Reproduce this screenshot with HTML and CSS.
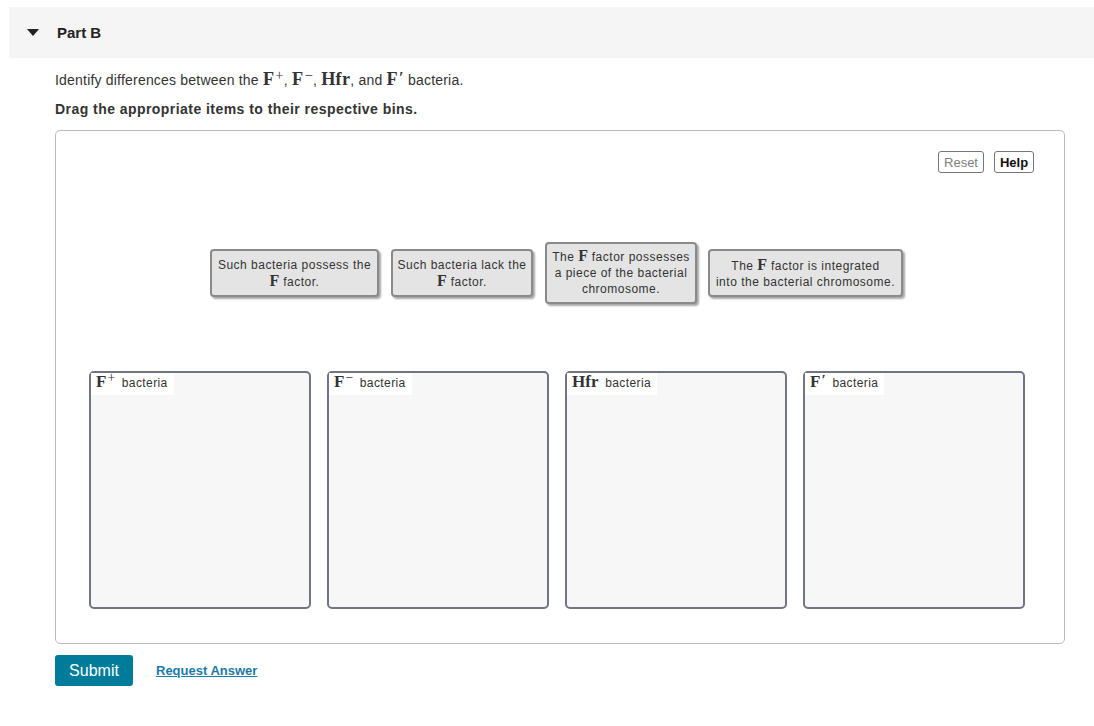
FILE: index.html
```html
<!DOCTYPE html>
<html lang="en">
<head>
    <meta charset="UTF-8">
    <title>Part B</title>
    <link rel="stylesheet" href="styles.css">
</head>
<body>
    <div class="part">
        <div class="part-header">
            <svg class="caret" width="12" height="7" viewBox="0 0 12 7"><polygon points="0,0 12,0 6,7" fill="#222"/></svg>
            <h2 class="part-title">Part B</h2>
        </div>

        <div class="part-body">
            <p class="question">Identify differences between the <span class="m">F<sup>+</sup></span>, <span class="m">F<sup>&minus;</sup></span>, <span class="m">Hfr</span>, and <span class="m">F<sup class="pr">&prime;</sup></span> bacteria.</p>
            <p class="instructions">Drag the appropriate items to their respective bins.</p>

            <div class="dnd-box">
                <div class="toolbar">
                    <button class="tool-btn reset">Reset</button>
                    <button class="tool-btn help">Help</button>
                </div>

                <div class="items">
                    <div class="item w1">Such bacteria possess the<br><span class="m">F</span> factor.</div>
                    <div class="item w2">Such bacteria lack the<br><span class="m">F</span> factor.</div>
                    <div class="item w3">The <span class="m">F</span> factor possesses<br>a piece of the bacterial<br>chromosome.</div>
                    <div class="item w4">The <span class="m">F</span> factor is integrated<br>into the bacterial chromosome.</div>
                </div>

                <div class="bins">
                    <div class="bin"><div class="bin-label"><span class="m">F<sup>+</sup></span> bacteria</div></div>
                    <div class="bin"><div class="bin-label"><span class="m">F<sup>&minus;</sup></span> bacteria</div></div>
                    <div class="bin"><div class="bin-label"><span class="m">Hfr</span> bacteria</div></div>
                    <div class="bin"><div class="bin-label"><span class="m">F<sup class="pr">&prime;</sup></span> bacteria</div></div>
                </div>
            </div>

            <div class="actions">
                <button class="submit">Submit</button>
                <a href="#" class="request">Request Answer</a>
            </div>
        </div>
    </div>
</body>
</html>
```

FILE: styles.css
```css
* {
    margin: 0;
    padding: 0;
    box-sizing: border-box;
}

body {
    font-family: 'Liberation Sans', Arial, sans-serif;
    color: #333;
    background: white;
    width: 1094px;
    height: 726px;
    overflow: hidden;
}

.part {
    padding-top: 7px;
}

.part-header {
    margin-left: 9px;
    height: 51px;
    background: #f5f5f5;
    display: flex;
    align-items: center;
}

.caret {
    margin-left: 18px;
    margin-right: 18px;
}

.part-title {
    font-size: 15px;
    font-weight: 700;
    color: #222;
}

.part-body {
    padding-left: 55px;
    padding-right: 29px;
}

/* MathJax-ish letters */
.m {
    font-family: 'Liberation Serif', 'DejaVu Serif', serif;
    font-weight: 700;
    font-size: 1.3em;
    line-height: 0;
    letter-spacing: 0.3px;
}

.m sup {
    font-weight: 400;
    font-size: 0.8em;
    vertical-align: 0.35em;
    margin-left: 1px;
    line-height: 0;
}

.m sup.pr {
    font-weight: 700;
    font-size: 0.9em;
    vertical-align: 0.15em;
}

.question {
    font-size: 14px;
    letter-spacing: 0.2px;
    margin-top: 13px;
    line-height: 18px;
    height: 18px;
}

.instructions {
    font-size: 14px;
    font-weight: 700;
    letter-spacing: 0.45px;
    margin-top: 11px;
    line-height: 18px;
}

.dnd-box {
    margin-top: 12px;
    border: 1px solid #bbb;
    border-radius: 5px;
    height: 514px;
    padding: 20px 30px 0 33px;
}

.toolbar {
    display: flex;
    justify-content: flex-end;
    gap: 10px;
    height: 22px;
}

.tool-btn {
    font-family: 'Liberation Sans', Arial, sans-serif;
    font-size: 13px;
    background: white;
    border: 1px solid #777;
    border-radius: 3px;
    height: 22px;
    padding: 0 4px;
}

.reset {
    color: #808080;
    width: 46px;
}

.help {
    color: #111;
    font-weight: 700;
    width: 40px;
}

.items {
    margin-top: 68px;
    height: 64px;
    display: flex;
    justify-content: center;
    align-items: center;
    gap: 12px;
    padding-right: 10px;
}

.item {
    background: #e4e4e4;
    border: 2px solid #8a8a8a;
    border-radius: 4px;
    box-shadow: 2px 2px 2px rgba(0, 0, 0, 0.35);
    font-size: 12px;
    letter-spacing: 0.5px;
    line-height: 16px;
    text-align: center;
    padding: 6px 2px 5px;
    white-space: nowrap;
}

.item .m {
    font-size: 16px;
    line-height: 1;
    letter-spacing: 0;
}

.w1 { width: 169px; }
.w2 { width: 142px; }
.w3 { width: 152px; padding-top: 4px; padding-bottom: 5px; }
.w4 { width: 195px; margin-left: -1px; }

.bins {
    margin-top: 66px;
    display: flex;
    gap: 16px;
}

.bin {
    width: 222px;
    height: 238px;
    background: #f7f7f7;
    border: 2px solid #737386;
    border-radius: 5px;
}

.bin-label {
    display: inline-block;
    background: white;
    font-size: 12px;
    letter-spacing: 0.4px;
    line-height: 21px;
    height: 22px;
    padding: 0 6px 0 5px;
}

.bin-label .m {
    font-size: 17px;
    margin-right: 3px;
    letter-spacing: 0;
}

.actions {
    margin-top: 11px;
    display: flex;
    align-items: center;
    gap: 23px;
}

.submit {
    font-family: 'Liberation Sans', Arial, sans-serif;
    font-size: 16px;
    color: white;
    background: #007c9b;
    border: none;
    border-radius: 3px;
    width: 78px;
    height: 31px;
}

.request {
    font-size: 13px;
    font-weight: 700;
    color: #1b7aa8;
    text-decoration: underline;
}
```
